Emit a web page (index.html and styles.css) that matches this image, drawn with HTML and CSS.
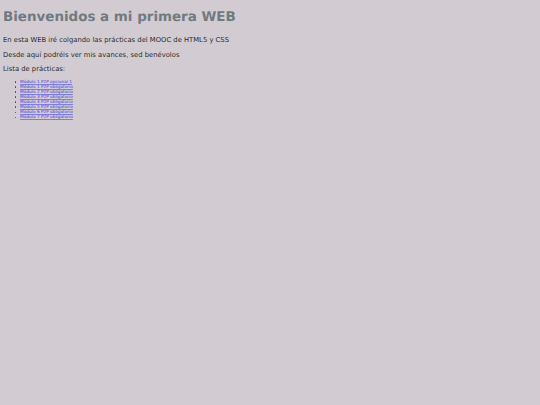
FILE: index.html
```html
<!DOCTYPE html>
<html lang="es">
<head>
<meta charset="utf-8">
<title>Bienvenidos a mi primera WEB</title>
<link rel="stylesheet" href="styles.css">
</head>
<body>
<h1 class="title">Bienvenidos a mi primera WEB</h1>
<p class="text">En esta WEB iré colgando las prácticas del MOOC de HTML5 y CSS</p>
<p class="text">Desde aquí podréis ver mis avances, sed benévolos</p>
<p class="text">Lista de prácticas:</p>
<ul class="list">
<li><a href="#">Módulo 1 P2P opcional 1</a></li>
<li><a href="#">Módulo 1 P2P obligatorio</a></li>
<li><a href="#">Módulo 2 P2P obligatorio</a></li>
<li><a href="#">Módulo 3 P2P obligatorio</a></li>
<li><a href="#">Módulo 4 P2P obligatorio</a></li>
<li><a href="#">Módulo 5 P2P obligatorio</a></li>
<li><a href="#">Módulo 6 P2P obligatorio</a></li>
<li><a href="#">Módulo 7 P2P obligatorio</a></li>
</ul>
</body>
</html>
```
FILE: styles.css
```css
html { background: #d2ccd2; }
body { margin: 3px; font-family: "DejaVu Sans", Verdana, sans-serif; color: #2a2a2a; text-rendering: geometricPrecision; opacity: 0.99; }
.title { margin: 6.5px 0 11.5px; font-size: 13.45px; line-height: 15px; font-weight: bold; color: #6f7a80; }
.text { margin: 0 0 6.5px; font-size: 6.8px; line-height: 8px; }
.list { margin: 0; padding: 0 0 0 11.5px; font-size: 4.25px; line-height: 5.05px; list-style: none; }
.list li { display: flex; align-items: center; gap: 4px; }
.list li::before { content: ""; width: 1.6px; height: 1.6px; border-radius: 50%; background: #444; }
.list a { color: #3a3ae8; text-decoration-color: rgba(60, 60, 232, 0.55); }
```
